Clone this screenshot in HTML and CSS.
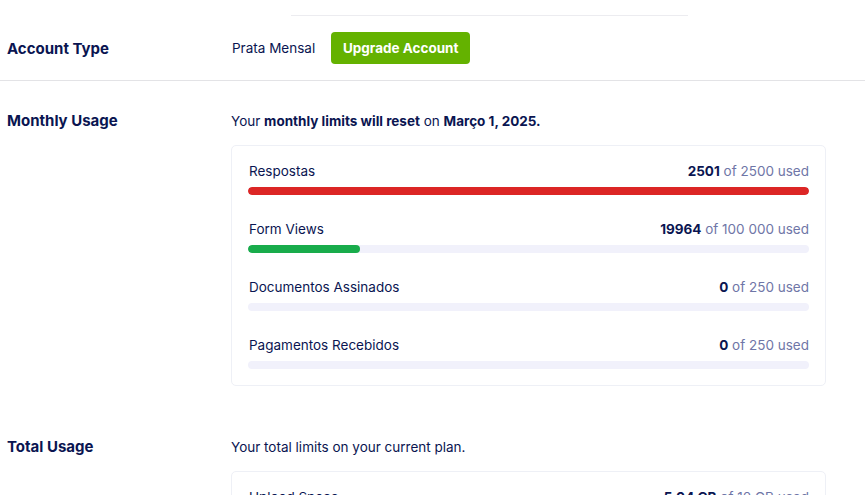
FILE: index.html
```html
<!DOCTYPE html>
<html lang="en">
<head>
<meta charset="utf-8">
<title>Usage</title>
<link rel="stylesheet" href="styles.css">
</head>
<body>
<div class="page">
  <div class="top-rule"></div>

  <section class="row account-row">
    <h2 class="row-label">Account Type</h2>
    <div class="row-body account-body">
      <span class="plan-name">Prata Mensal</span>
      <button class="upgrade-btn">Upgrade Account</button>
    </div>
  </section>

  <section class="row usage-row">
    <h2 class="row-label">Monthly Usage</h2>
    <div class="row-body">
      <p class="intro">Your <b>monthly limits will reset</b> on <b>Março 1, 2025.</b></p>
      <div class="card">
        <div class="meter">
          <div class="meter-head"><span class="meter-name">Respostas</span><span class="meter-count"><b>2501</b> of 2500 used</span></div>
          <div class="track"><div class="fill fill-red" style="width:100%"></div></div>
        </div>
        <div class="meter">
          <div class="meter-head"><span class="meter-name">Form Views</span><span class="meter-count"><b>19964</b> of 100 000 used</span></div>
          <div class="track"><div class="fill fill-green" style="width:19.96%"></div></div>
        </div>
        <div class="meter">
          <div class="meter-head"><span class="meter-name">Documentos Assinados</span><span class="meter-count"><b>0</b> of 250 used</span></div>
          <div class="track"></div>
        </div>
        <div class="meter">
          <div class="meter-head"><span class="meter-name">Pagamentos Recebidos</span><span class="meter-count"><b>0</b> of 250 used</span></div>
          <div class="track"></div>
        </div>
      </div>
    </div>
  </section>

  <section class="row total-row">
    <h2 class="row-label">Total Usage</h2>
    <div class="row-body">
      <p class="intro">Your total limits on your current plan.</p>
      <div class="card">
        <div class="meter">
          <div class="meter-head"><span class="meter-name">Upload Space</span><span class="meter-count"><b>5.04 GB</b> of 10 GB used</span></div>
          <div class="track"><div class="fill fill-green" style="width:50.4%"></div></div>
        </div>
      </div>
    </div>
  </section>
</div>
</body>
</html>
```

FILE: styles.css
```css
html, body {
  margin: 0;
  padding: 0;
  background: #ffffff;
}

body {
  font-family: Inter, "Noto Sans", "Liberation Sans", sans-serif;
  color: #0a1551;
  font-size: 13.5px;
  line-height: 20px;
  overflow: hidden;
}

.page {
  width: 865px;
}

.top-rule {
  margin-left: 291px;
  width: 397px;
  height: 15px;
  border-bottom: 1px solid #ececf0;
}

.row {
  display: grid;
  grid-template-columns: 231px 595px;
}

.row-label {
  margin: 0;
  padding-left: 7px;
  font-size: 15px;
  font-weight: 700;
  line-height: 20px;
  color: #0a1551;
}

.row-body {
  min-width: 0;
}

.account-row {
  padding: 16px 0;
  align-items: center;
  border-bottom: 1px solid #e3e3e6;
}

.account-row .row-label {
  padding-top: 1px;
}

.account-body {
  display: flex;
  align-items: center;
  gap: 16px;
  padding-left: 1px;
}

.plan-name {
  font-size: 13.5px;
}

.upgrade-btn {
  height: 32px;
  width: 139px;
  padding: 0;
  border: none;
  border-radius: 4px;
  background: #64b200;
  color: #ffffff;
  font-family: inherit;
  font-size: 13.5px;
  font-weight: 700;
  cursor: pointer;
}

.usage-row {
  padding-top: 30px;
}

.total-row {
  padding-top: 51px;
}

.intro {
  margin: 0 0 14px;
  line-height: 20px;
}

.intro b {
  font-weight: 700;
}

.card {
  border: 1px solid #eef0f6;
  border-radius: 5px;
  padding: 15px 16px 16px 17px;
  display: flex;
  flex-direction: column;
  gap: 24px;
}

.meter-head {
  display: flex;
  justify-content: space-between;
  line-height: 20px;
  margin-bottom: 6px;
}

.meter-count {
  color: #6f76a7;
}

.meter-count b {
  color: #0a1551;
  font-weight: 700;
}

.track {
  height: 8px;
  border-radius: 4px;
  background: #f1f1fb;
  overflow: hidden;
  margin-left: -1px;
}

.fill {
  height: 100%;
  border-radius: 4px;
}

.fill-red {
  background: #dc2625;
}

.fill-green {
  background: #18ac4b;
}
```
